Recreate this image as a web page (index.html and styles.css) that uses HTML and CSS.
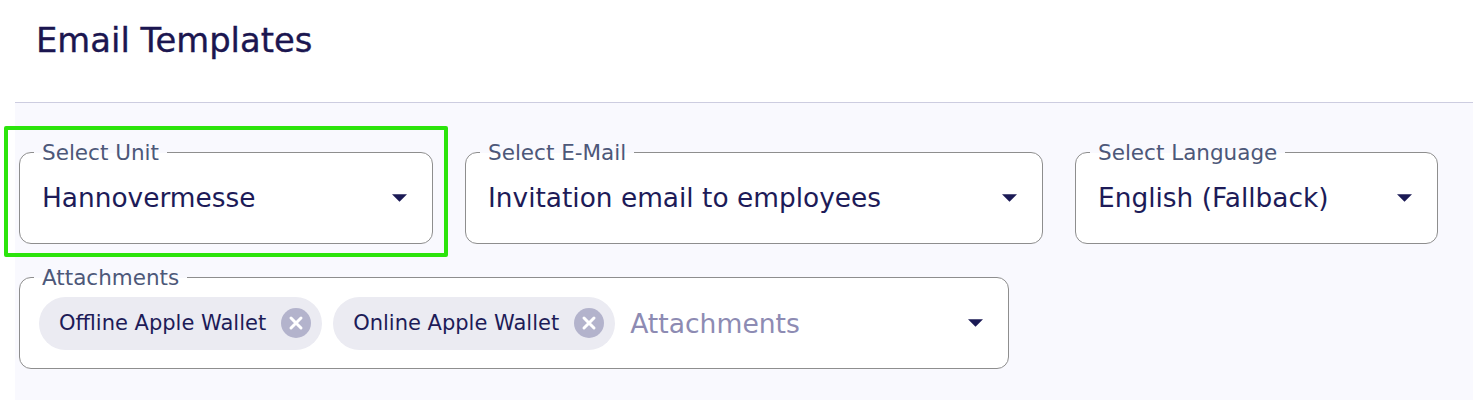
FILE: index.html
```html
<!DOCTYPE html>
<html lang="en">
<head>
<meta charset="utf-8">
<title>Email Templates</title>
<link rel="stylesheet" href="styles.css">
</head>
<body>
<header class="header">
  <h1 class="title">Email Templates</h1>
</header>
<main class="panel">
  <div class="highlight"></div>
  <div class="row">
    <div class="field field-unit">
      <span class="label">Select Unit</span>
      <span class="value">Hannovermesse</span>
      <svg class="arrow" viewBox="0 0 10 5" width="15" height="8"><path d="M0 0l5 5 5-5z"/></svg>
    </div>
    <div class="field field-email">
      <span class="label">Select E-Mail</span>
      <span class="value">Invitation email to employees</span>
      <svg class="arrow" viewBox="0 0 10 5" width="15" height="8"><path d="M0 0l5 5 5-5z"/></svg>
    </div>
    <div class="field field-lang">
      <span class="label">Select Language</span>
      <span class="value">English (Fallback)</span>
      <svg class="arrow" viewBox="0 0 10 5" width="15" height="8"><path d="M0 0l5 5 5-5z"/></svg>
    </div>
  </div>
  <div class="row row-second">
    <div class="field field-attach">
      <span class="label">Attachments</span>
      <div class="chips">
        <span class="chip">Offline Apple Wallet
          <svg class="chip-x" viewBox="0 0 30 30" width="30" height="30"><circle cx="15" cy="15" r="15"/><path d="M10 10l10 10M20 10L10 20"/></svg>
        </span>
        <span class="chip">Online Apple Wallet
          <svg class="chip-x" viewBox="0 0 30 30" width="30" height="30"><circle cx="15" cy="15" r="15"/><path d="M10 10l10 10M20 10L10 20"/></svg>
        </span>
        <span class="placeholder">Attachments</span>
      </div>
      <svg class="arrow" viewBox="0 0 10 5" width="15" height="8"><path d="M0 0l5 5 5-5z"/></svg>
    </div>
  </div>
</main>
</body>
</html>
```
FILE: styles.css
```css
* { box-sizing: border-box; }
html, body { margin: 0; padding: 0; }
body {
  background: #ffffff;
  font-family: "DejaVu Sans", "Noto Sans", sans-serif;
  color: #1d1b58;
  width: 1473px;
  height: 400px;
  overflow: hidden;
}
.header {
  height: 102px;
  padding: 21px 0 0 36px;
}
.title {
  margin: 0;
  font-size: 33.8px;
  line-height: 39px;
  font-weight: normal;
  color: #1b1650;
  -webkit-text-stroke: 0.35px #1b1650;
}
.panel {
  position: relative;
  margin-left: 15px;
  border-top: 1px solid #cdcde0;
  background: #f9f9fe;
  height: 298px;
  padding: 49px 0 0 4px;
}
.row {
  display: flex;
  gap: 32px;
}
.row-second { margin-top: 33px; }
.field {
  position: relative;
  height: 92px;
  border: 1px solid #8e8e8e;
  border-radius: 12px;
  background: #ffffff;
  display: flex;
  align-items: center;
  padding: 0 25px 0 22px;
}
.field-unit { width: 414px; }
.field-email { width: 578px; }
.field-lang { width: 363px; }
.field-attach { width: 990px; padding-left: 19px; }
.label {
  position: absolute;
  top: -12px;
  left: 14px;
  padding: 0 8px;
  font-size: 21.5px;
  line-height: 24px;
  color: #4d5879;
  background: linear-gradient(to bottom, #f9f9fe 50%, #ffffff 50%);
}
.value {
  flex: 1;
  font-size: 26.4px;
  line-height: 30px;
  color: #1d1b58;
}
.arrow {
  flex: none;
  fill: #1b1a55;
}
.chips {
  flex: 1;
  display: flex;
  align-items: center;
  gap: 11px;
}
.chip {
  display: inline-flex;
  align-items: center;
  gap: 15px;
  height: 53px;
  padding: 0 11px 0 20px;
  border-radius: 27px;
  background: #ebebf2;
  font-size: 21px;
  color: #1d1b58;
  white-space: nowrap;
}
.chip-x circle { fill: #b3b3cc; }
.chip-x path { stroke: #ffffff; stroke-width: 3; stroke-linecap: round; }
.placeholder {
  margin-left: 4px;
  font-size: 26.6px;
  color: #8d8bb3;
}
.highlight {
  position: absolute;
  left: -11px;
  top: 23px;
  width: 444px;
  height: 131px;
  border: 4px solid #2ce40c;
  border-radius: 2px;
  pointer-events: none;
}
```
